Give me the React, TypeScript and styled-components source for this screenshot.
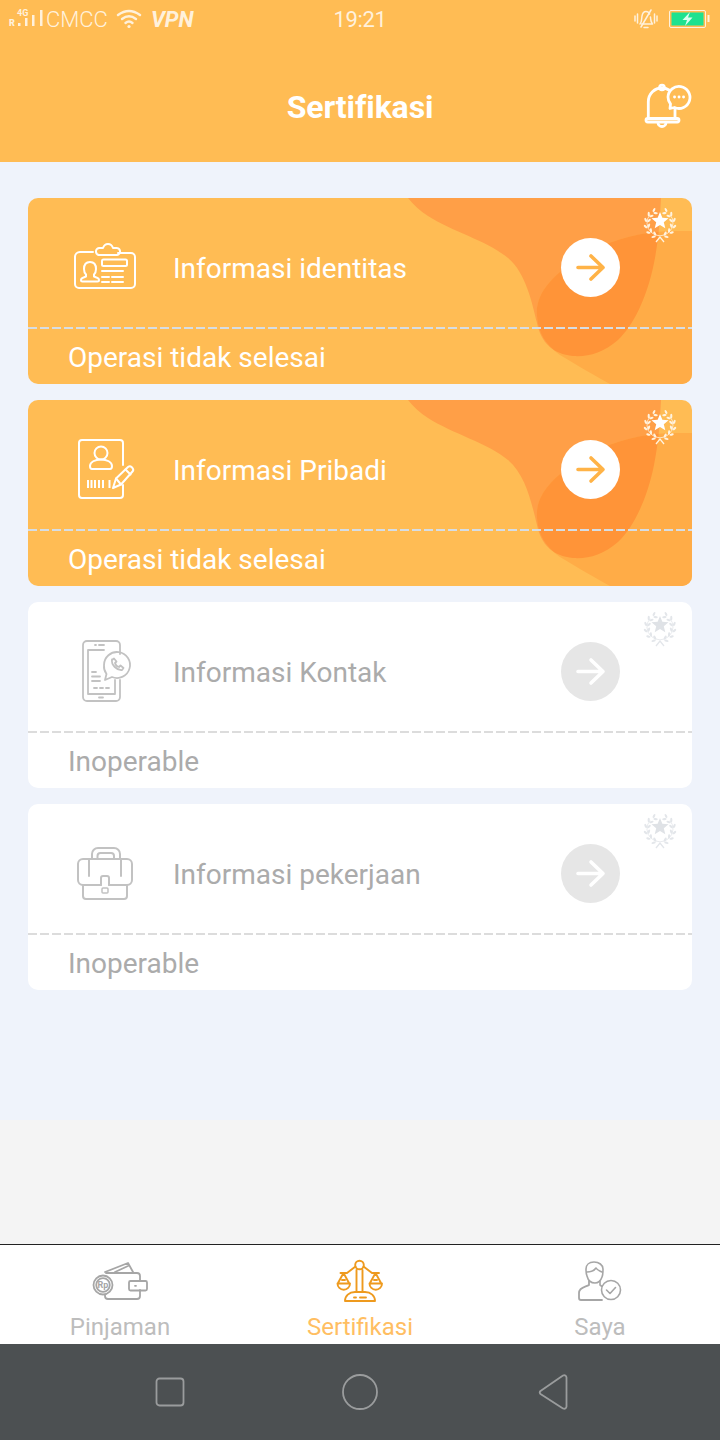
import React from "react";
import styled, { createGlobalStyle } from "styled-components";

const ORANGE = "#FFBC54";
const GRAY_ICON = "#C2C2C2";

const GlobalStyle = createGlobalStyle`
    html, body {
        margin: 0;
        padding: 0;
        font-family: Roboto, "Liberation Sans", sans-serif;
    }
`;

const Page = styled.div`
    width: 720px;
    height: 1440px;
    display: flex;
    flex-direction: column;
    overflow: hidden;
    background: #f4f4f4;
`;

const TopArea = styled.header`
    height: 162px;
    background: ${ORANGE};
    display: flex;
    flex-direction: column;
`;

const StatusBar = styled.div`
    height: 38px;
    display: grid;
    grid-template-columns: 1fr auto 1fr;
    align-items: center;
    color: #fff1dc;
    font-size: 22px;
`;

const StatusLeft = styled.div`
    display: flex;
    align-items: center;
    padding-left: 8px;
`;

const Carrier = styled.span`
    font-weight: 300;
`;

const Vpn = styled.span`
    margin-left: 9px;
    font-weight: 700;
    font-style: italic;
`;

const WifiIcon = styled.svg`
    margin-left: 8px;
`;

const Clock = styled.span`
    font-weight: 400;
    letter-spacing: -0.4px;
`;

const StatusRight = styled.div`
    display: flex;
    align-items: center;
    justify-content: flex-end;
    gap: 11px;
    padding-right: 10px;
`;

const TitleBar = styled.div`
    flex: 1;
    display: grid;
    grid-template-columns: 1fr auto 1fr;
    align-items: center;
    padding-top: 14px;
`;

const Title = styled.h1`
    grid-column: 2;
    margin: 0;
    color: #fff;
    font-size: 32px;
    font-weight: 700;
    letter-spacing: -0.1px;
`;

const BellSlot = styled.div`
    display: flex;
    justify-content: flex-end;
    padding-right: 25px;
`;

const Main = styled.main`
    flex: 1;
    display: flex;
    flex-direction: column;
`;

const CardList = styled.section`
    height: 958px;
    box-sizing: border-box;
    padding: 36px 28px 0;
    background: #eff3fb;
    display: flex;
    flex-direction: column;
    gap: 16px;
`;

const Card = styled.article<{ $active: boolean }>`
    position: relative;
    height: 186px;
    border-radius: 10px;
    overflow: hidden;
    background: ${(p) => (p.$active ? ORANGE : "#fff")};
    color: ${(p) => (p.$active ? "#fff" : "#ababab")};
`;

const CardDecor = styled.svg`
    position: absolute;
    inset: 0;
`;

const Medal = styled.svg`
    position: absolute;
    top: 9px;
    right: 14px;
`;

const CardTop = styled.div`
    position: relative;
    height: 129px;
    box-sizing: border-box;
    padding: 10px 72px 0 22px;
    display: flex;
    align-items: center;
`;

const CardIcon = styled.svg`
    flex: none;
    margin-right: 13px;
`;

const CardTitle = styled.span`
    flex: 1;
    padding-top: 1px;
    font-size: 28px;
`;

const ArrowCircle = styled.div<{ $active: boolean }>`
    width: 59px;
    height: 59px;
    border-radius: 50%;
    background: ${(p) => (p.$active ? "#fff" : "#e6e6e6")};
    display: flex;
`;

const DashLine = styled.div<{ $active: boolean }>`
    position: relative;
    height: 2px;
    background: repeating-linear-gradient(
        90deg,
        ${(p) => (p.$active ? "#d6dde4" : "#dcdcdc")} 0 9px,
        transparent 9px 12px
    );
`;

const CardStatus = styled.div`
    position: relative;
    height: 55px;
    box-sizing: border-box;
    padding: 2px 0 0 40px;
    display: flex;
    align-items: center;
    font-size: 28px;
`;

const TabBar = styled.nav`
    margin-top: auto;
    height: 100px;
    box-sizing: border-box;
    border-top: 1px solid #222;
    background: #fff;
    display: grid;
    grid-template-columns: repeat(3, 1fr);
`;

const Tab = styled.div<{ $active?: boolean }>`
    display: flex;
    flex-direction: column;
    align-items: center;
    color: ${(p) => (p.$active ? "#ffbe62" : "#bdbdbd")};
    font-size: 24px;
`;

const TabLabel = styled.span`
    margin-top: 7px;
    line-height: 30px;
`;

const SystemNav = styled.div`
    height: 96px;
    box-sizing: border-box;
    padding-left: 155px;
    background: #4c5052;
    display: flex;
    align-items: center;
    gap: 156px;
`;

const NavBackIcon = styled.svg`
    margin-left: 3px;
`;

const lineProps = {
    fill: "none",
    strokeLinecap: "round" as const,
    strokeLinejoin: "round" as const,
};

const SignalIcon = () => (
    <svg width="38" height="26" viewBox="8 6 38 26">
        <text x="17" y="16" fontSize="9" fontWeight="700" fontFamily="Roboto" fill="#fff1dc">4G</text>
        <text x="9" y="26" fontSize="9" fontWeight="900" fontFamily="Roboto" fill="#fff1dc">R</text>
        <rect x="18" y="23" width="2.5" height="3" fill="#fff1dc" />
        <rect x="25" y="18" width="2.5" height="8" fill="#fff1dc" />
        <rect x="32" y="15" width="2.5" height="11" fill="#fff1dc" />
        <rect x="40" y="10" width="2.5" height="16" fill="#fff1dc" />
    </svg>
);

const Wifi = () => (
    <WifiIcon width="26" height="20" viewBox="0 0 26 20" {...lineProps} stroke="#fff1dc" strokeWidth="2.4">
        <path d="M2 6 Q13 -2 24 6" />
        <path d="M6 10 Q13 4.5 20 10" />
        <path d="M9.5 14 Q13 11 16.5 14" />
        <circle cx="13" cy="17.5" r="1.6" fill="#fff1dc" stroke="none" />
    </WifiIcon>
);

const MuteIcon = () => (
    <svg width="24" height="20" viewBox="0 0 24 20" {...lineProps} stroke="#fff1dc" strokeWidth="1.5">
        <path d="M1 7v5M3.5 5v9M20.5 5v9M23 7v5" />
        <path d="M6 15c2-2 1.5-5 2-8 .5-3 2-4.5 4-4.500 1.500 0 3 1 3.600 2.500" />
        <path d="M16.500 8c.3 3 0 5 2 7H7.500" />
        <path d="M17 1 7 18" />
        <path d="M10 18.500h4" />
    </svg>
);

const BatteryIcon = () => (
    <svg width="41" height="18" viewBox="0 0 41 18">
        <rect x="0.500" y="0.500" width="36" height="17" rx="1.500" fill="none" stroke="#fff1dc" />
        <rect x="2.500" y="2.500" width="32" height="13" fill="#1de28f" />
        <rect x="38.500" y="5" width="2" height="7" fill="#fff1dc" />
        <path d="M21 2 13.500 10h4.500l-2 6 7.500-8.500h-4.500z" fill="#d8fff0" />
    </svg>
);

const BellIcon = () => (
    <svg width="55" height="50" viewBox="640 82 55 50" {...lineProps} stroke="#fff" strokeWidth="2.800">
        <path d="M648.300 118V102c0-8.500 6.500-14 13.700-14 2.800 0 5 .7 7 2" />
        <path d="M675 109v9" />
        <circle cx="662" cy="87.500" r="2.400" />
        <rect x="646" y="118.500" width="33" height="3.500" rx="1.700" />
        <path d="M658 122.500a4 4 0 0 0 8 0" />
        <path d="M668 97a11 11 0 1 1 6.500 10.500L670 108.500l.5-4.500A11 11 0 0 1 668 97z" />
        <path d="M674.500 97h.1M679 97h.1M683.500 97h.1" />
    </svg>
);

const IdIcon = () => (
    <CardIcon width="110" height="80" viewBox="0 8 110 80" {...lineProps} stroke="#fff" strokeWidth="2">
        <path d="M43 32H30a5 5 0 0 0-5 5v27a4 4 0 0 0 4 4h52a4 4 0 0 0 4-4V37a4 4 0 0 0-4-4H68" />
        <path d="M50 35a3.500 3.500 0 0 1-1-7h4c1-3 3-4 5-4s4 1 5 4h3a3.500 3.500 0 0 1 1 7z" />
        <rect x="52" y="39.500" width="25" height="6.500" rx="1.500" />
        <path d="M52 51h21M52 57h7M62 57h11M52 62h7M62 62h11" />
        <path d="M40 42c-4 0-6 3-6 7 0 3 1 4.500 2 5.500v2c-2 1-5 1-5 3.500q0 1.500 1.500 1.500h15q1.500 0 1.500-1.500c0-2.500-3-2.500-5-3.500v-2c1-1 2-2.500 2-5.500 0-4-2-7-6-7z" />
    </CardIcon>
);

const ProfileIcon = () => (
    <CardIcon width="110" height="80" viewBox="0 5 110 80" {...lineProps} stroke="#fff" strokeWidth="2">
        <path d="M73 40V18a3 3 0 0 0-3-3H32a3 3 0 0 0-3 3v52a3 3 0 0 0 3 3h38a3 3 0 0 0 3-3V60" />
        <circle cx="51" cy="28" r="6.500" />
        <path d="M42 44c-1 0-2-1-2-3 0-4 5-6.500 11-6.500s11 2.500 11 6.500c0 2-1 3-2 3z" />
        <path d="M38 55v8M41.500 55v8M45 55v8M49 55v8M53 55v8M59.500 55v8" strokeLinecap="butt" strokeWidth="2" />
        <path d="M63 63l3-9.500L78 42q2-1.500 3.500 0l1 1q1.500 2 0 3.500L71 59.500z" />
        <path d="M75.500 44.500l5 5M66 53.500l5 6" />
    </CardIcon>
);

const PhoneIcon = () => (
    <CardIcon width="110" height="80" viewBox="0 2 110 80" {...lineProps} stroke={GRAY_ICON} strokeWidth="1.800">
        <path d="M70 24V15a4 4 0 0 0-4-4H37a4 4 0 0 0-4 4v52a4 4 0 0 0 4 4h29a4 4 0 0 0 4-4V50" />
        <path d="M54 20H38v44h27V50" />
        <path d="M45 15h1M49 15h5M49 67.500h4" />
        <path d="M42 42h4M42 46.500h8M42 51h8M44 58h3M50 58h3M56 58h3" />
        <path d="M54 35a13 13 0 1 1 8 12l-7 3 1.500-6A13 13 0 0 1 54 35z" />
        <path d="M62 30l2-1.500 2.500 3-1.500 1.500c.5 2 2 3.500 4 4l1.500-1.500 3 2.500-1.500 2c-5 .5-11-5-10-10.500z" />
    </CardIcon>
);

const BagIcon = () => (
    <CardIcon width="110" height="80" viewBox="0 -1 110 80" {...lineProps} stroke={GRAY_ICON} strokeWidth="2">
        <path d="M51 50H33a5 5 0 0 1-5-5V29a5 5 0 0 1 5-5h44a5 5 0 0 1 5 5v16a5 5 0 0 1-5 5H59" />
        <path d="M33 50v11a3 3 0 0 0 3 3h38a3 3 0 0 0 3-3V50" />
        <path d="M42 24v-5a6 6 0 0 1 6-6h16a6 6 0 0 1 6 6v5" />
        <path d="M47.500 24v-3a3 3 0 0 1 3-3H61a3 3 0 0 1 3 3v3" />
        <path d="M39 24v17M71 24v17" />
        <path d="M51 50v-7a2 2 0 0 1 2-2h4a2 2 0 0 1 2 2v7" />
        <rect x="52" y="53" width="6" height="5" rx="1" strokeWidth="1.500" />
    </CardIcon>
);

const ArrowGlyph = ({ color }: { color: string }) => (
    <svg width="59" height="59" viewBox="0 0 59 59" {...lineProps} stroke={color} strokeWidth="3.600">
        <path d="M17 29.500h25M30 18l12 11.500L30 41" />
    </svg>
);

const starPoints = Array.from({ length: 10 }, (_, i) => {
    const angle = (Math.PI / 5) * i - Math.PI / 2;
    const r = i % 2 === 0 ? 9 : 4;
    return `${18 + r * Math.cos(angle)},${14 + r * Math.sin(angle)}`;
}).join(" ");

// leaf pairs climb both sides of the wreath and leave the top open
const leafAngles = [22, 48, 74, 100, 126, 152];

const MedalIcon = ({ leaf, star }: { leaf: string; star: string }) => (
    <Medal width="36" height="38" viewBox="0 0 36 38">
        <polygon points={starPoints} fill={star} />
        <path d="M8 7.500A13 13 0 1 0 28 7.500" fill="none" stroke={leaf} strokeWidth="0.800" />
        {[1, -1].map((side) =>
            leafAngles.map((deg) => {
                const a = 90 - side * deg;
                const rad = (a * Math.PI) / 180;
                const x = 18 + 13 * Math.cos(rad);
                const y = 16 + 13 * Math.sin(rad) + 0.500;
                const tangent = a - side * 90;
                return (
                    <g key={`${side}-${deg}`} transform={`translate(${x} ${y}) rotate(${tangent})`}>
                        <ellipse cx="1.800" cy="-0.800" rx="2.200" ry="1.100" fill={leaf} transform="rotate(-35)" />
                        <ellipse cx="1.800" cy="0.800" rx="2.200" ry="1.100" fill={leaf} transform="rotate(35)" />
                    </g>
                );
            })
        )}
        <path d="M14 35l4-5 4 5" fill="none" stroke={leaf} strokeWidth="1.300" />
    </Medal>
);

const blobPath = "M380 0H633C632 20 631 40 626 65C619 100 605 128 590 142C575 155 560 159 545 158C525 156 513 145 509 125C504 105 498 75 480 60C460 43 425 34 400 18C392 13 385 6 380 0Z";
const lowerPath = "M664 33H640C610 35 580 42 555 58C525 76 507 95 509 118C510 135 518 147 532 157C550 168 568 178 582 186H664Z";

const CardBackground = ({ clipId }: { clipId: string }) => (
    <CardDecor width="664" height="186" viewBox="0 0 664 186">
        <defs>
            <clipPath id={clipId}>
                <path d={blobPath} />
            </clipPath>
        </defs>
        <path d={blobPath} fill="#ff9f47" />
        <path d={lowerPath} fill="#ffac47" />
        <path d={lowerPath} fill="#ff9438" clipPath={`url(#${clipId})`} />
    </CardDecor>
);

const WalletIcon = () => (
    <svg width="120" height="60" viewBox="0 5 120 60" {...lineProps} stroke="#a6a6a6" strokeWidth="1.800">
        <path d="M46 33H77a3 3 0 0 1 3 3v5M80 50v6a3 3 0 0 1-3 3H48a3 3 0 0 1-3-3v-2" />
        <path d="M45 32l23-9 5 9M55 32l13-6" />
        <circle cx="43" cy="45" r="9.500" fill="#fff" />
        <circle cx="43" cy="45" r="6.800" />
        <text x="43" y="48" textAnchor="middle" fontSize="9" fontWeight="700" fontFamily="Roboto" fill="#a6a6a6" stroke="none">Rp</text>
        <rect x="69" y="41" width="18" height="9.500" rx="1.500" />
        <path d="M75 45.800h1" />
    </svg>
);

const ScaleIcon = () => (
    <svg width="120" height="60" viewBox="0 5 120 60" {...lineProps} stroke="#ee9a1e" strokeWidth="1.900">
        <circle cx="59.500" cy="25" r="4.300" />
        <path d="M56.500 30v22M62.500 30v22" />
        <path d="M55.500 26.500 47 33H40.500M63.500 26.500 72 33H79" />
        <path d="M43.500 33l-5.500 10M43.500 33l5.500 10M37.500 43.500h12.500a6.200 6.200 0 0 1-12.500 0zM42 40h3" />
        <path d="M75.500 33l-5.500 10M75.500 33l5.500 10M69.500 43.500h12.500a6.200 6.200 0 0 1-12.500 0zM74 40h3" />
        <path d="M45 61c0-5 4-9 10-9h10c6 0 10 4 10 9z" />
        <path d="M54 57.500h2M60 57.500h6" />
    </svg>
);

const UserCheckIcon = () => (
    <svg width="120" height="60" viewBox="0 5 120 60" {...lineProps} stroke="#a6a6a6" strokeWidth="1.600">
        <path d="M54 22c-5 0-8 3-8 7 0 3 0 5 1 7 1 4 4 7 8 7s6-3 7-6c1-2 1-4 1-8 0-4-4-7-9-7z" />
        <path d="M47 32c3 0 7-1 9-4 1 2 4 3 6 4" />
        <path d="M49 41v4c-3 2-10 2-10 8v5a2 2 0 0 0 2 2h21" strokeWidth="1.800" />
        <path d="M60 41v4l2 1.500" />
        <circle cx="71" cy="50" r="9.500" />
        <path d="M66.500 50l3.500 3.500 5.500-6" />
    </svg>
);

const NavSquare = () => (
    <svg width="30" height="30" viewBox="0 0 30 30" fill="none" stroke="#9a9c9d" strokeWidth="1.800">
        <rect x="1.500" y="1.500" width="27" height="27" rx="3" />
    </svg>
);

const NavCircle = () => (
    <svg width="38" height="38" viewBox="0 0 38 38" fill="none" stroke="#9a9c9d" strokeWidth="1.800">
        <circle cx="19" cy="19" r="17" />
    </svg>
);

const NavBack = () => (
    <NavBackIcon width="32" height="36" viewBox="0 0 32 36" fill="none" stroke="#9a9c9d" strokeWidth="1.800" strokeLinejoin="round">
        <path d="M2.500 17 25 1.500q3-1 3.500 2V32.500q-.5 3-3.500 2L2.500 20q-1.500-1.500 0-3z" />
    </NavBackIcon>
);

const cards = [
    { title: "Informasi identitas", status: "Operasi tidak selesai", active: true, icon: <IdIcon /> },
    { title: "Informasi Pribadi", status: "Operasi tidak selesai", active: true, icon: <ProfileIcon /> },
    { title: "Informasi Kontak", status: "Inoperable", active: false, icon: <PhoneIcon /> },
    { title: "Informasi pekerjaan", status: "Inoperable", active: false, icon: <BagIcon /> },
];

export default function App() {
    return (
        <Page>
            <GlobalStyle />
            <TopArea>
                <StatusBar>
                    <StatusLeft>
                        <SignalIcon />
                        <Carrier>CMCC</Carrier>
                        <Wifi />
                        <Vpn>VPN</Vpn>
                    </StatusLeft>
                    <Clock>19:21</Clock>
                    <StatusRight>
                        <MuteIcon />
                        <BatteryIcon />
                    </StatusRight>
                </StatusBar>
                <TitleBar>
                    <Title>Sertifikasi</Title>
                    <BellSlot>
                        <BellIcon />
                    </BellSlot>
                </TitleBar>
            </TopArea>
            <Main>
                <CardList>
                    {cards.map((card, i) => (
                        <Card key={card.title} $active={card.active}>
                            {card.active && <CardBackground clipId={`blob-${i}`} />}
                            {card.active
                                ? <MedalIcon leaf="#fff3df" star="#fff" />
                                : <MedalIcon leaf="#e3e6ea" star="#dfe2e6" />}
                            <CardTop>
                                {card.icon}
                                <CardTitle>{card.title}</CardTitle>
                                <ArrowCircle $active={card.active}>
                                    <ArrowGlyph color={card.active ? "#ffb347" : "#fff"} />
                                </ArrowCircle>
                            </CardTop>
                            <DashLine $active={card.active} />
                            <CardStatus>{card.status}</CardStatus>
                        </Card>
                    ))}
                </CardList>
                <TabBar>
                    <Tab>
                        <WalletIcon />
                        <TabLabel>Pinjaman</TabLabel>
                    </Tab>
                    <Tab $active>
                        <ScaleIcon />
                        <TabLabel>Sertifikasi</TabLabel>
                    </Tab>
                    <Tab>
                        <UserCheckIcon />
                        <TabLabel>Saya</TabLabel>
                    </Tab>
                </TabBar>
            </Main>
            <SystemNav>
                <NavSquare />
                <NavCircle />
                <NavBack />
            </SystemNav>
        </Page>
    );
}
